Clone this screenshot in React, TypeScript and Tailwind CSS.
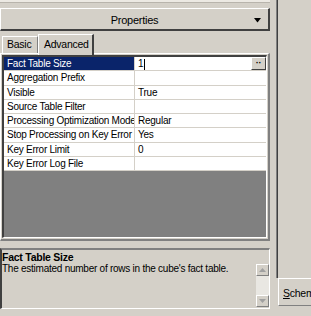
import React from "react";

const rows = [
  ["Fact Table Size", "1"],
  ["Aggregation Prefix", ""],
  ["Visible", "True"],
  ["Source Table Filter", ""],
  ["Processing Optimization Mode", "Regular"],
  ["Stop Processing on Key Error", "Yes"],
  ["Key Error Limit", "0"],
  ["Key Error Log File", ""],
];

export default function App() {
  return (
    <div
      className="w-[311px] h-[316px] bg-[#d4d0c8] flex overflow-hidden text-[10px] tracking-[-0.25px] text-black"
      style={{ fontFamily: '"Liberation Sans", Arial, sans-serif' }}
    >
      {/* left pane */}
      <div className="w-[270px] flex flex-col shrink-0">
        <div className="h-[3px] bg-[#ece9e3] border-b border-[#b8b4ac]" />
        <div className="h-[5px]" />
        {/* properties dropdown button */}
        <div className="h-[23px] border-t border-l border-white border-r-2 border-b-2 border-r-[#404040] border-b-[#404040] flex items-center relative text-[11px]">
          <div className="flex-1 text-center leading-none pt-[2px]">Properties</div>
          <svg className="absolute right-[6px] top-[9px]" width="8" height="5" viewBox="0 0 8 5">
            <path d="M0 0 H7 L3.5 4.5 Z" fill="#000" />
          </svg>
        </div>
        {/* tabs */}
        <div className="h-[22px] flex items-end pl-[2px] mt-[1px] relative z-10 text-[10.5px]">
          <div className="h-[17px] w-[36px] border-t border-l border-white border-r border-r-[#808080] flex items-center pl-[4px] mb-[1px]">
            Basic
          </div>
          <div className="h-[21px] w-[56px] border-t border-l border-white border-r-2 border-r-[#404040] bg-[#d4d0c8] flex items-center pl-[5px] -mb-[1px]">
            Advanced
          </div>
        </div>
        {/* tab page */}
        <div className="h-[188px] border-t border-l border-white border-r-2 border-b-2 border-r-[#808080] border-b-[#808080] p-[1px] -mt-[1px]">
          <div className="h-full border-t-2 border-l-2 border-t-[#404040] border-l-[#404040] border-r border-b border-r-white border-b-white flex flex-col bg-[#808080]">
            {rows.map(([k, v], i) => (
              <div key={k} className="h-[14.25px] flex bg-white border-b border-[#d4d0c8] shrink-0">
                <div
                  className={
                    "w-[131px] shrink-0 border-r border-[#d4d0c8] pl-[3px] whitespace-nowrap overflow-hidden leading-[13px] " +
                    (i === 0 ? "bg-[#0a246a] text-white" : "")
                  }
                >
                  {k}
                </div>
                <div className="flex-1 pl-[3px] leading-[13px] relative">
                  {i === 0 ? (
                    <>
                      <span>1</span>
                      <span className="inline-block w-[1px] h-[11px] bg-black align-middle ml-[1px]" />
                      <div className="absolute right-0 top-0 h-[13px] w-[15px] bg-[#d4d0c8] border-t border-l border-white border-r border-b border-r-[#404040] border-b-[#404040] flex items-start justify-center pt-[1px] leading-none text-[9px] font-bold">
                        ··
                      </div>
                    </>
                  ) : (
                    v
                  )}
                </div>
              </div>
            ))}
          </div>
        </div>
        <div className="h-[7px]" />
        {/* description */}
        <div className="h-[61px] border-t-2 border-l-2 border-t-[#808080] border-l-[#404040] border-r border-b border-r-white border-b-white flex">
          <div className="flex-1 pt-[2px] leading-[11px] overflow-hidden">
            <div className="font-bold text-[10.5px]">Fact Table Size</div>
            <div className="whitespace-nowrap">The estimated number of rows in the cube's fact table.</div>
          </div>
          <div className="w-[13px] flex flex-col pt-[14px] pb-[1px]">
            <div className="h-[12px] border-t border-l border-white border-r border-b border-r-[#808080] border-b-[#808080] flex items-center justify-center">
              <svg width="7" height="4" viewBox="0 0 7 4">
                <path d="M3.5 0 L7 4 H0 Z" fill="#a0a0a0" />
              </svg>
            </div>
            <div className="flex-1 bg-[#e9e7e2]" />
            <div className="h-[12px] border-t border-l border-white border-r border-b border-r-[#808080] border-b-[#808080] flex items-center justify-center">
              <svg width="7" height="4" viewBox="0 0 7 4">
                <path d="M0 0 H7 L3.5 4 Z" fill="#a0a0a0" />
              </svg>
            </div>
          </div>
        </div>
      </div>
      {/* splitter */}
      <div className="w-[6px] shrink-0" />
      <div className="w-[2px] shrink-0 flex flex-col">
        <div className="h-[278px] bg-[#808080] border-r border-[#404040]" />
      </div>
      {/* right pane */}
      <div className="flex-1 flex flex-col">
        <div className="h-[278px]" />
        <div className="h-[28px] w-[60px] border-t border-l border-white border-b border-b-[#808080] flex items-center pl-[4px] pt-[4px] whitespace-nowrap text-[10.5px]">
          <span>
            <span className="underline">S</span>chema
          </span>
        </div>
      </div>
    </div>
  );
}
